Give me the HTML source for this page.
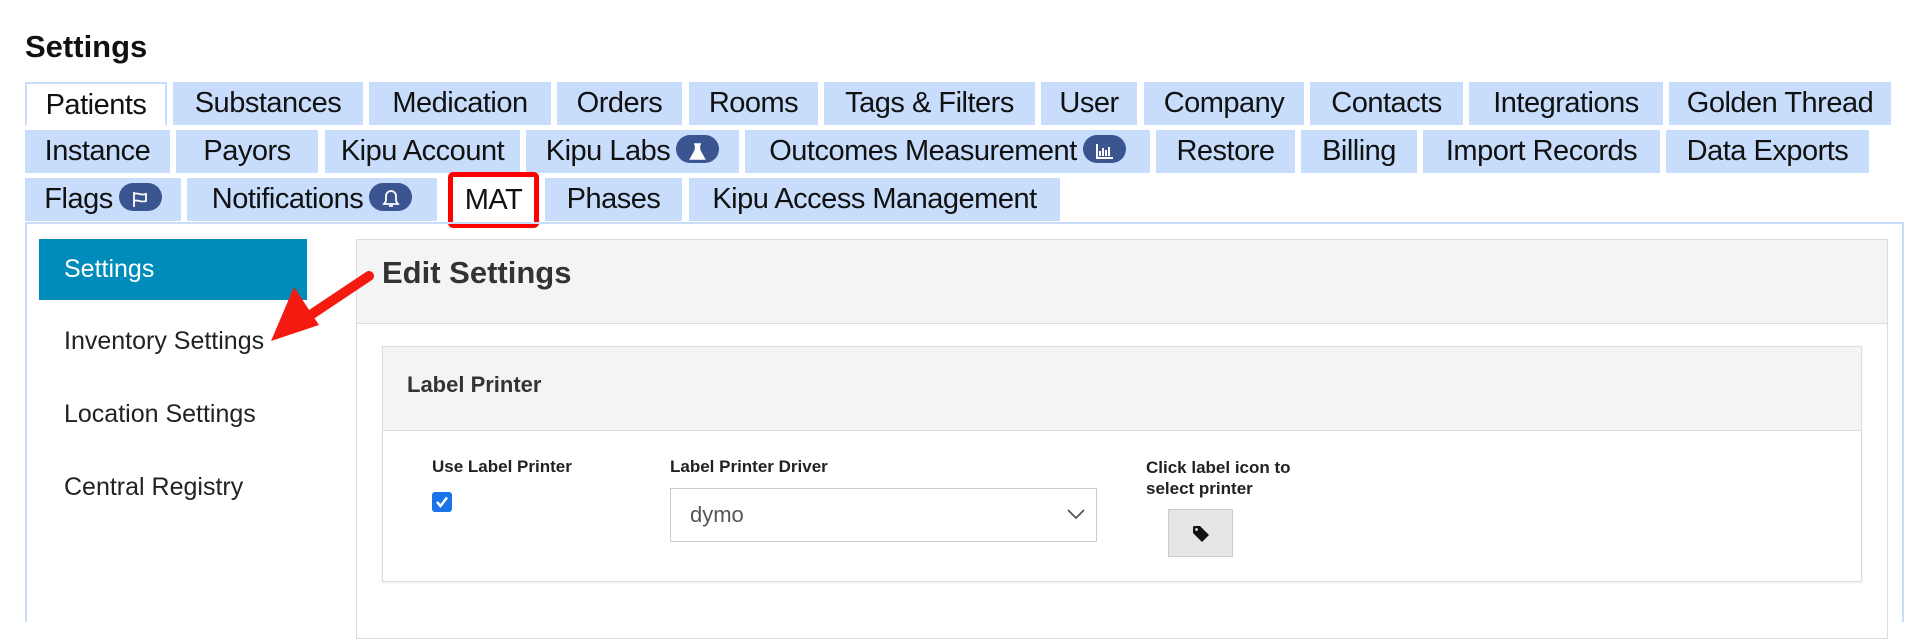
<!DOCTYPE html>
<html><head><meta charset="utf-8"><style>
*{box-sizing:border-box;margin:0;padding:0}
body{width:1928px;height:610px;background:#fff;font-family:"Liberation Sans",sans-serif;color:#111;position:relative;overflow:hidden}
.a{position:absolute}
.tab{position:absolute;background:#c8ddfb;height:43px;font-size:29px;line-height:43px;text-align:center;white-space:nowrap;color:#111;letter-spacing:-0.5px}
.badge{display:inline-block;vertical-align:middle;background:#3b5590;border-radius:14px;width:43px;height:28px;margin-left:6px;position:relative;top:-3px}
.nav{position:absolute;left:64px;font-size:25px;color:#222}
</style></head><body>
<div class="a" style="left:25px;top:29px;font-size:31px;font-weight:bold;">Settings</div>

<div class="tab" style="left:25px;top:82px;width:142px;background:#fff;border:2px solid #c8ddfb;border-bottom:none;">Patients</div>
<div class="tab" style="left:173px;top:82px;width:190px">Substances</div>
<div class="tab" style="left:369px;top:82px;width:182px">Medication</div>
<div class="tab" style="left:557px;top:82px;width:125px">Orders</div>
<div class="tab" style="left:689px;top:82px;width:129px">Rooms</div>
<div class="tab" style="left:824px;top:82px;width:211px">Tags &amp; Filters</div>
<div class="tab" style="left:1041px;top:82px;width:96px">User</div>
<div class="tab" style="left:1144px;top:82px;width:160px">Company</div>
<div class="tab" style="left:1310px;top:82px;width:153px">Contacts</div>
<div class="tab" style="left:1469px;top:82px;width:194px">Integrations</div>
<div class="tab" style="left:1669px;top:82px;width:222px">Golden Thread</div>

<div class="tab" style="left:25px;top:130px;width:145px">Instance</div>
<div class="tab" style="left:176px;top:130px;width:142px">Payors</div>
<div class="tab" style="left:325px;top:130px;width:195px">Kipu Account</div>
<div class="tab" style="left:526px;top:130px;width:213px">Kipu Labs<span class="badge"><svg width="43" height="28" viewBox="0 0 43 28"><path d="M18 7h7M19.5 7v6l-5 9h14l-5-9V7" fill="#fff" stroke="#fff" stroke-width="1.5"/></svg></span></div>
<div class="tab" style="left:745px;top:130px;width:405px">Outcomes Measurement<span class="badge"><svg width="43" height="28" viewBox="0 0 43 28"><path d="M14 7v14h16M17 19v-5M20 19v-8M23 19v-6M26 19v-9" stroke="#fff" stroke-width="2" fill="none"/></svg></span></div>
<div class="tab" style="left:1156px;top:130px;width:139px">Restore</div>
<div class="tab" style="left:1301px;top:130px;width:116px">Billing</div>
<div class="tab" style="left:1423px;top:130px;width:237px">Import Records</div>
<div class="tab" style="left:1666px;top:130px;width:203px">Data Exports</div>

<div class="tab" style="left:25px;top:178px;width:156px">Flags<span class="badge"><svg width="43" height="28" viewBox="0 0 43 28"><path d="M15 7v15M15 9c4-2 6 2 12 0v7c-6 2-8-2-12 0" stroke="#fff" stroke-width="1.8" fill="none"/></svg></span></div>
<div class="tab" style="left:187px;top:178px;width:250px">Notifications<span class="badge"><svg width="43" height="28" viewBox="0 0 43 28"><path d="M15 19h14l-2-3v-5a5 5 0 0 0-10 0v5zM20 21h4" stroke="#fff" stroke-width="1.8" fill="none"/></svg></span></div>
<div class="tab" style="left:448px;top:172px;width:91px;height:56px;background:#fff;border:5px solid #f00;border-radius:5px;line-height:46px">MAT</div>
<div class="tab" style="left:545px;top:178px;width:137px">Phases</div>
<div class="tab" style="left:689px;top:178px;width:371px">Kipu Access Management</div>

<div class="a" style="left:25px;top:222px;width:1879px;height:400px;border:2px solid #c8ddfb;border-bottom:none"></div>

<div class="a" style="left:39px;top:239px;width:268px;height:61px;background:#008cba;color:#fff;font-size:25px;line-height:61px;padding-left:25px">Settings</div>
<div class="nav" style="top:327px">Inventory Settings</div>
<div class="nav" style="top:400px">Location Settings</div>
<div class="nav" style="top:473px">Central Registry</div>

<div class="a" style="left:356px;top:239px;width:1532px;height:400px;border:1px solid #ddd"></div>
<div class="a" style="left:357px;top:240px;width:1530px;height:84px;background:#f4f4f4;border-bottom:1px solid #ddd"></div>
<div class="a" style="left:382px;top:255px;font-size:31px;font-weight:bold;color:#333">Edit Settings</div>

<div class="a" style="left:382px;top:346px;width:1480px;height:236px;border:1px solid #ddd;box-shadow:0 1px 2px rgba(0,0,0,.08)"></div>
<div class="a" style="left:383px;top:347px;width:1478px;height:84px;background:#f4f4f4;border-bottom:1px solid #ddd"></div>
<div class="a" style="left:407px;top:372px;font-size:22px;font-weight:bold;color:#333">Label Printer</div>

<div class="a" style="left:432px;top:457px;font-size:17px;font-weight:bold;color:#222">Use Label Printer</div>
<div class="a" style="left:432px;top:492px;width:20px;height:20px;background:#1a73e8;border-radius:3px"><svg width="20" height="20"><path d="M5 10l3.5 4L15 5.5" stroke="#fff" stroke-width="2.5" fill="none"/></svg></div>

<div class="a" style="left:670px;top:457px;font-size:17px;font-weight:bold;color:#222">Label Printer Driver</div>
<div class="a" style="left:670px;top:488px;width:427px;height:54px;border:1px solid #ccc;font-size:22px;color:#555;line-height:52px;padding-left:19px">dymo
<svg class="a" style="right:10px;top:18px" width="20" height="14"><path d="M2 3l8 8 8-8" stroke="#555" stroke-width="1.8" fill="none"/></svg></div>

<div class="a" style="left:1146px;top:457px;font-size:17px;font-weight:bold;color:#222;line-height:21px">Click label icon to<br>select printer</div>
<div class="a" style="left:1168px;top:509px;width:65px;height:48px;background:#e6e6e6;border:1px solid #ccc"><svg class="a" style="left:23px;top:15px" width="18" height="18" viewBox="0 0 18 18"><path d="M1 2.5A1.5 1.5 0 0 1 2.5 1H8l9 9-7 7-9-9z" fill="#111"/><circle cx="4.5" cy="4.5" r="1.4" fill="#e6e6e6"/></svg></div>

<svg class="a" style="left:0;top:0" width="1928" height="610"><path d="M369 276L294 326" stroke="#f41a0f" stroke-width="10" stroke-linecap="round"/><path d="M271 341L294 287L319 325Z" fill="#f41a0f"/></svg>
</body></html>
